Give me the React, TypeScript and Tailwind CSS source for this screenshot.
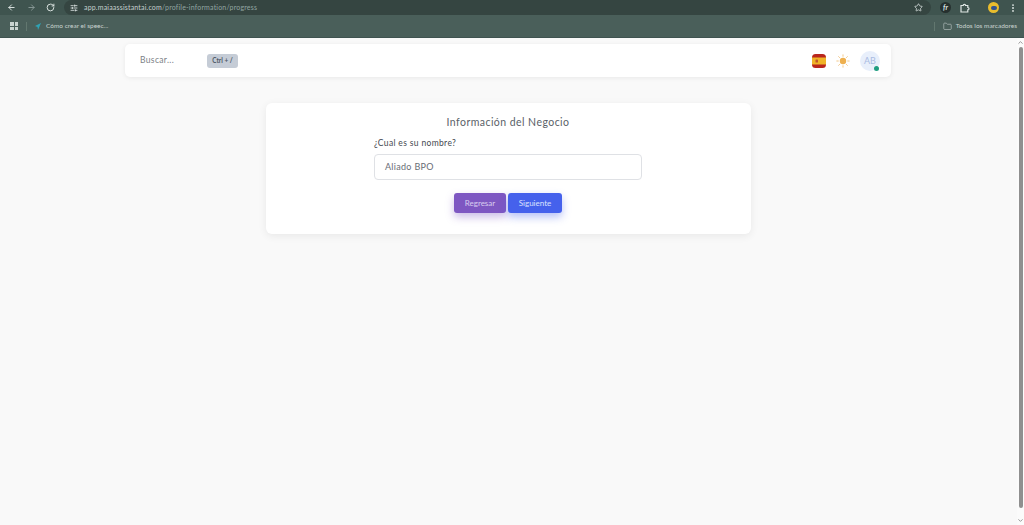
import { ArrowLeft, ArrowRight, RotateCw, SlidersHorizontal, Star, Folder, EllipsisVertical, ChevronUp, ChevronDown } from "lucide-react"

function Flag() {
  return (
    <svg width="14" height="14" viewBox="0 0 14 14" className="shrink-0">
      <rect width="14" height="14" rx="3.5" fill="#b9261d" />
      <rect y="3.5" width="14" height="7" fill="#f0b428" />
      <rect x="3.5" y="5.5" width="2.5" height="3" rx="0.6" fill="#c0562a" />
    </svg>
  )
}

function SunIcon() {
  return (
    <svg width="14" height="14" viewBox="0 0 14 14" className="shrink-0" stroke="#f3c98a" strokeWidth="1" strokeLinecap="round">
      <circle cx="7" cy="7" r="3.2" fill="#eeb04f" stroke="none" />
      <path d="M7 .8v1.5M7 11.7v1.5M.8 7h1.5M11.7 7h1.5M2.6 2.6l1 1M10.4 10.4l1 1M2.6 11.4l1-1M10.4 3.6l1-1" />
    </svg>
  )
}

function ExtensionIcon() {
  return (
    <svg width="10" height="10" viewBox="0 0 10 10" fill="none" stroke="#dfe6e4" strokeWidth="1.2" className="ml-[9px]">
      <path d="M1 2.5h2.2a1.2 1.2 0 0 1 2.4 0h2.2v2a1.2 1.2 0 0 1 0 2.4v2.1H1z" />
    </svg>
  )
}

export default function App() {
  return (
    <div className="h-[525px] overflow-hidden flex flex-col bg-[#f9f9f9] font-['Lato','Noto_Sans',sans-serif]">
      {/* browser bar */}
      <div className="h-[15px] bg-[#3f544f] flex items-center text-[#dfe6e4]">
        <div className="w-[64px] pl-[7px] flex items-center gap-[11px] shrink-0">
          <ArrowLeft size={9} strokeWidth={2.5} />
          <ArrowRight size={9} strokeWidth={2.5} className="text-[#8a9a97]" />
          <RotateCw size={9} strokeWidth={2.5} className="-ml-px" />
        </div>
        <div className="w-[867px] h-[15px] rounded-full bg-[#354541] flex items-center px-[6px] gap-[6px] shrink-0">
          <SlidersHorizontal size={8} strokeWidth={2.5} />
          <span className="text-[7px] leading-none tracking-[0.18px] text-[#c5d0ce]">
            app.maiaassistantai.com<span className="text-[#93a5a2]">/profile-information/progress</span>
          </span>
          <Star size={9} strokeWidth={2} className="ml-auto mr-[2px]" />
        </div>
        <div className="flex-1 flex items-center pl-[9px]">
          <span className="w-[11px] h-[11px] rounded-full bg-[#26302f] text-[7px] italic font-bold leading-[11px] text-center">fr</span>
          <ExtensionIcon />
          <span className="w-[11px] h-[11px] rounded-full bg-[#e9bd2d] ml-[18px] flex items-center justify-center">
            <span className="w-[6px] h-[4px] rounded-full bg-[#33548f]" />
          </span>
          <EllipsisVertical size={10} strokeWidth={2.5} className="ml-[9px]" />
        </div>
      </div>
      <div className="h-[23px] bg-[#4a5f5a] flex items-center text-[#c9d3d0] border-b border-[#3f5350]">
        <div className="ml-[10px] w-[8px] h-[8px] grid grid-cols-2 gap-[1px]">
          <span className="bg-[#c9d3d0]" />
          <span className="bg-[#c9d3d0]" />
          <span className="bg-[#c9d3d0]" />
          <span className="bg-[#c9d3d0]" />
        </div>
        <span className="ml-[8px] w-px h-[9px] bg-[#62776f]" />
        <svg width="6" height="7" viewBox="0 0 6 7" className="ml-[8px]">
          <path d="M6 0 0 3l2.5 1L3 7z" fill="#2fa3b5" />
        </svg>
        <span className="ml-[5px] text-[6.5px] leading-none">Cómo crear el speec...</span>
        <span className="ml-auto w-px h-[9px] bg-[#62776f]" />
        <Folder size={9} strokeWidth={1.5} className="ml-[8px]" />
        <span className="ml-[4px] mr-[7px] text-[6.5px] leading-none">Todos los marcadores</span>
      </div>

      <div className="flex-1 flex min-h-0">
        <main className="flex-1 flex flex-col items-center pt-[6px] pr-px">
          {/* navbar */}
          <header className="w-[766px] h-[33px] bg-white rounded-[5px] shadow-[0_1px_5px_rgba(0,0,0,0.07)] flex items-center pl-[15px] pr-[11px]">
            <span className="text-[8.5px] text-[#7b7f86] tracking-[0.35px] w-[67px]">Buscar...</span>
            <span className="w-[31px] h-[14px] rounded-[3px] bg-[#c5ccd6] text-[6.5px] font-bold text-[#4f5a68] flex items-center justify-center">Ctrl + /</span>
            <div className="ml-auto flex items-center">
              <Flag />
              <span className="ml-[10px]"><SunIcon /></span>
              <div className="relative ml-[10px] w-[20px] h-[20px] rounded-full bg-[#e8effb] text-[9px] text-[#a9bbe2] flex items-center justify-center">
                AB
                <span className="absolute right-[1px] bottom-0 w-[5px] h-[5px] rounded-full bg-[#1f9d80]" />
              </div>
            </div>
          </header>

          {/* form card */}
          <section className="mt-[26px] w-[485px] h-[131px] bg-white rounded-[6px] shadow-[0_2px_8px_rgba(0,0,0,0.07)] flex flex-col items-center pt-[12px]">
            <h1 className="text-[10.5px] leading-[15px] text-[#5a5f68] tracking-[0.45px] font-normal">Información del Negocio</h1>
            <div className="mt-[7px] w-[268px]">
              <label className="block text-[8.5px] leading-[12px] text-[#43474f] tracking-[0.35px]">¿Cual es su nombre?</label>
              <div className="mt-[5px] h-[26px] rounded-[4px] border border-[#dfe1e5] flex items-center pl-[10px] text-[9px] text-[#696d75] tracking-[0.3px]">
                Aliado BPO
              </div>
            </div>
            <div className="mt-[13px] flex gap-[2px]">
              <button className="w-[52px] h-[20px] rounded-[3px] bg-[#7e57c2] text-[8px] text-[#d9cdf0] shadow-[0_4px_9px_rgba(126,87,194,0.4)]">Regresar</button>
              <button className="w-[54px] h-[20px] rounded-[3px] bg-[#4561ec] text-[8px] text-[#dbe2ff] shadow-[0_4px_9px_rgba(69,97,236,0.4)]">Siguiente</button>
            </div>
          </section>
        </main>

        {/* scrollbar */}
        <div className="w-[7px] bg-[#fbfbfb] flex flex-col items-center text-[#8a8a8a]">
          <ChevronUp size={7} strokeWidth={3} className="mt-[1px]" />
          <div className="mt-[1px] w-[4px] h-[461px] rounded-full bg-[#8f8f8f]" />
          <ChevronDown size={7} strokeWidth={3} className="mt-auto mb-[1px]" />
        </div>
      </div>
    </div>
  )
}
